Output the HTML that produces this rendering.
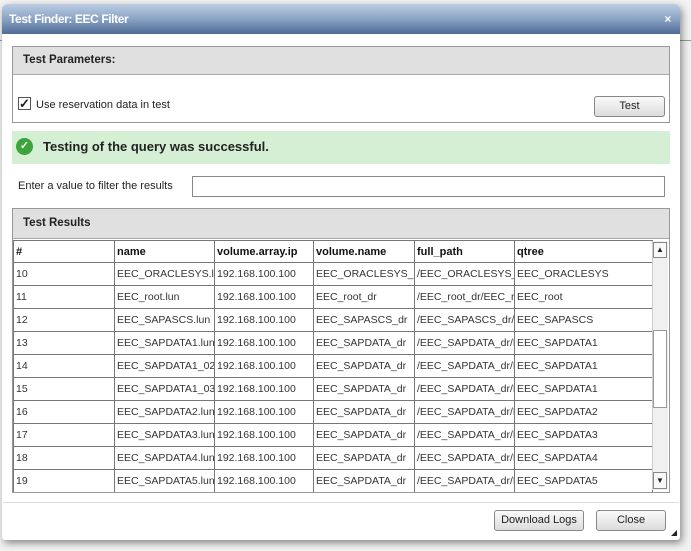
<!DOCTYPE html>
<html><head><style>
*{box-sizing:border-box;margin:0;padding:0}
body{width:691px;height:551px;background:#f2f2f2;font-family:"Liberation Sans",sans-serif;font-size:11px;color:#222;position:relative;overflow:hidden}
.a{position:absolute}
.dlg{left:2px;top:4px;width:678px;height:536px;background:#fff;border-radius:6px 6px 3px 3px;box-shadow:2px 3px 8px rgba(0,0,0,.45);overflow:hidden}
.title{left:0;top:0;width:678px;height:30px;background:linear-gradient(#bccde2,#8aa3c4 50%,#4f6c95);color:#fff;font-weight:bold;font-size:12px;line-height:30px;padding-left:7px;letter-spacing:-.4px}
.btn{border:1px solid #888;border-radius:3px;background:linear-gradient(#fafafa,#dcdcdc);text-align:center;font-size:11px;color:#222}
table{border-collapse:collapse;table-layout:fixed;position:absolute;left:13px;top:241px;width:639px}
td{border:1px solid #777;height:23px;padding-left:2px;white-space:nowrap;overflow:hidden;font-size:10.5px;color:#333}
th{border:1px solid #777;height:22px;text-align:left;padding-left:2px;font-size:11px;color:#111;white-space:nowrap;overflow:hidden}
</style></head><body>
<div class="a" style="left:0;top:40px;width:691px;height:1px;background:#999"></div>
<div class="a dlg">
<div class="a title">Test Finder: EEC Filter<span style="position:absolute;right:9px;top:0;font-size:12px">×</span></div>
</div>
<div class="a" style="left:12px;top:46px;width:658px;height:77px;border:1px solid #999"></div>
<div class="a" style="left:13px;top:47px;width:656px;height:28px;background:#e0e0e0;border-bottom:1px solid #aaa;font-weight:bold;font-size:11.5px;line-height:27px;padding-left:10px">Test Parameters:</div>
<div class="a" style="left:18px;top:97px;width:13px;height:13px;border:1px solid #555;background:#fff;font-size:13px;line-height:11px;text-align:center;font-weight:bold">✓</div>
<div class="a" style="left:36px;top:99px;font-size:11px">Use reservation data in test</div>
<div class="a btn" style="left:594px;top:96px;width:71px;height:21px;line-height:19px">Test</div>
<div class="a" style="left:12px;top:131px;width:658px;height:33px;background:#d5efd4"></div>
<div class="a" style="left:16px;top:138px;width:17px;height:17px;border-radius:50%;background:#3da33d;color:#fff;font-size:11px;text-align:center;line-height:17px;font-weight:bold">✓</div>
<div class="a" style="left:43px;top:139px;font-size:13px;font-weight:bold;color:#222">Testing of the query was successful.</div>
<div class="a" style="left:18px;top:180px">Enter a value to filter the results</div>
<div class="a" style="left:192px;top:176px;width:473px;height:21px;border:1px solid #888;background:#fff"></div>
<div class="a" style="left:12px;top:208px;width:658px;height:285px;border:1px solid #999"></div>
<div class="a" style="left:13px;top:209px;width:656px;height:30px;background:#e0e0e0;border-bottom:1px solid #aaa;font-weight:bold;font-size:11.5px;line-height:29px;padding-left:10px">Test Results</div>
<div class="a" style="left:13px;top:240px;width:656px;height:252px;overflow:hidden">
<table style="left:0;top:0">
<colgroup><col style="width:101px"><col style="width:100px"><col style="width:99px"><col style="width:101px"><col style="width:100px"><col style="width:138px"></colgroup>
<tr><th>#</th><th>name</th><th>volume.array.ip</th><th>volume.name</th><th>full_path</th><th>qtree</th></tr>
<tr><td>10</td><td>EEC_ORACLESYS.lun</td><td>192.168.100.100</td><td>EEC_ORACLESYS_dr</td><td>/EEC_ORACLESYS_dr</td><td>EEC_ORACLESYS</td></tr>
<tr><td>11</td><td>EEC_root.lun</td><td>192.168.100.100</td><td>EEC_root_dr</td><td>/EEC_root_dr/EEC_r</td><td>EEC_root</td></tr>
<tr><td>12</td><td>EEC_SAPASCS.lun</td><td>192.168.100.100</td><td>EEC_SAPASCS_dr</td><td>/EEC_SAPASCS_dr/E</td><td>EEC_SAPASCS</td></tr>
<tr><td>13</td><td>EEC_SAPDATA1.lun</td><td>192.168.100.100</td><td>EEC_SAPDATA_dr</td><td>/EEC_SAPDATA_dr/E</td><td>EEC_SAPDATA1</td></tr>
<tr><td>14</td><td>EEC_SAPDATA1_02.</td><td>192.168.100.100</td><td>EEC_SAPDATA_dr</td><td>/EEC_SAPDATA_dr/E</td><td>EEC_SAPDATA1</td></tr>
<tr><td>15</td><td>EEC_SAPDATA1_03.</td><td>192.168.100.100</td><td>EEC_SAPDATA_dr</td><td>/EEC_SAPDATA_dr/E</td><td>EEC_SAPDATA1</td></tr>
<tr><td>16</td><td>EEC_SAPDATA2.lun</td><td>192.168.100.100</td><td>EEC_SAPDATA_dr</td><td>/EEC_SAPDATA_dr/E</td><td>EEC_SAPDATA2</td></tr>
<tr><td>17</td><td>EEC_SAPDATA3.lun</td><td>192.168.100.100</td><td>EEC_SAPDATA_dr</td><td>/EEC_SAPDATA_dr/E</td><td>EEC_SAPDATA3</td></tr>
<tr><td>18</td><td>EEC_SAPDATA4.lun</td><td>192.168.100.100</td><td>EEC_SAPDATA_dr</td><td>/EEC_SAPDATA_dr/E</td><td>EEC_SAPDATA4</td></tr>
<tr><td>19</td><td>EEC_SAPDATA5.lun</td><td>192.168.100.100</td><td>EEC_SAPDATA_dr</td><td>/EEC_SAPDATA_dr/E</td><td>EEC_SAPDATA5</td></tr>
</table>
</div>
<div class="a" style="left:652px;top:241px;width:16px;height:249px;background:#f0f0f0;border-left:1px solid #ccc"></div>
<div class="a" style="left:653px;top:242px;width:14px;height:16px;border:1px solid #888;background:#f8f8f8;font-size:8px;text-align:center;line-height:14px">▲</div>
<div class="a" style="left:653px;top:330px;width:14px;height:78px;border:1px solid #999;background:#fff"></div>
<div class="a" style="left:653px;top:472px;width:14px;height:17px;border:1px solid #888;background:#f8f8f8;font-size:8px;text-align:center;line-height:15px">▼</div>
<div class="a" style="left:3px;top:502px;width:676px;height:1px;background:#ddd"></div>
<div class="a btn" style="left:494px;top:510px;width:90px;height:21px;line-height:19px">Download Logs</div>
<div class="a btn" style="left:596px;top:510px;width:70px;height:21px;line-height:19px">Close</div>
<div class="a" style="left:671px;top:530px;width:0;height:0;border-left:6px solid transparent;border-bottom:6px solid #222"></div>
</body></html>
